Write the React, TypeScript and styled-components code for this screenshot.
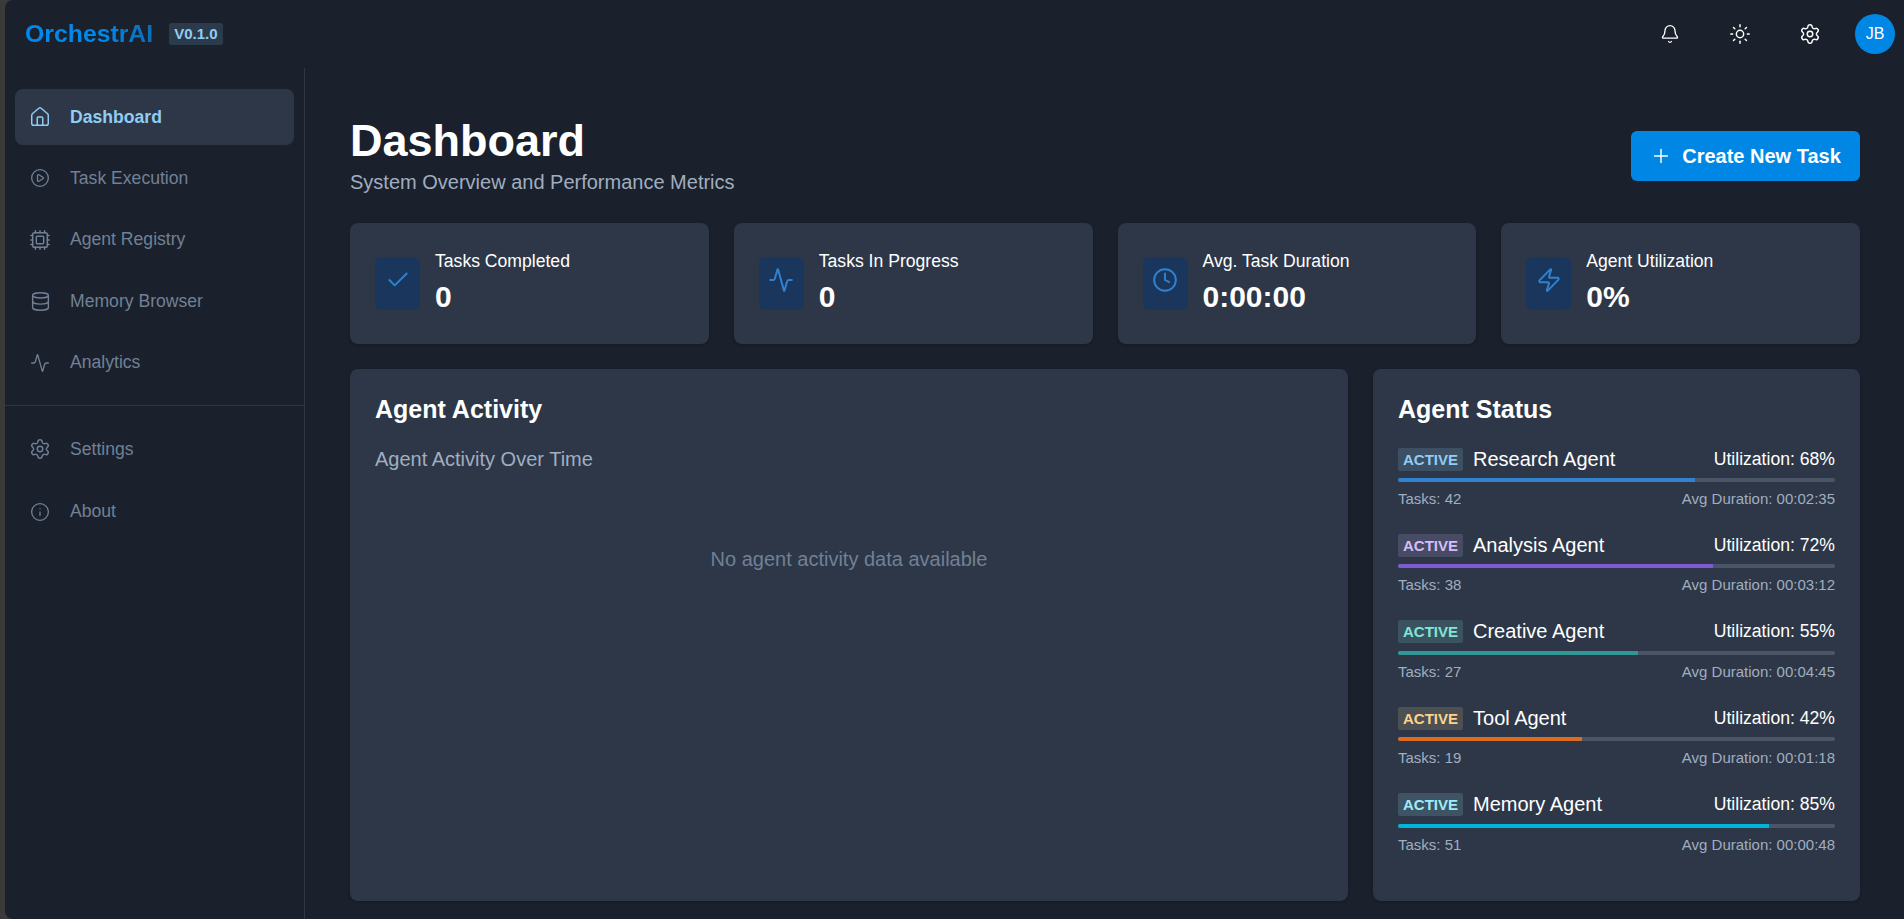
import React from "react";
import styled, { createGlobalStyle } from "styled-components";
import { Bell, Sun, Settings, House, CirclePlay, Cpu, Database, Activity, Info, Check, Clock, Zap, Plus } from "lucide-react";

const Global = createGlobalStyle`
  html, body { margin: 0; padding: 0; height: 100%; background: #3a3a3a; overflow: hidden; }
  #root { height: 100%; }
  * { box-sizing: border-box; }
  body { font-family: "Liberation Sans", Arial, sans-serif; color: #fff; }
`;

const Frame = styled.div`
  height: 919px;
  margin-left: 5px;
  background: #1a202c;
  border-top-left-radius: 8px;
  border-bottom-left-radius: 8px;
  display: flex;
  flex-direction: column;
  overflow: hidden;
`;

const Header = styled.header`
  height: 68px;
  flex: none;
  display: flex;
  align-items: center;
  justify-content: space-between;
  padding: 0 9px 0 20px;
`;

const Brand = styled.div`
  display: flex;
  align-items: center;
  gap: 16px;
`;

const Logo = styled.span`
  font-size: 24.8px;
  font-weight: 700;
  line-height: 28px;
  background: linear-gradient(90deg, #0089ec 0%, #0089ec 60%, #0b6cb5 100%);
  -webkit-background-clip: text;
  background-clip: text;
  color: transparent;
`;

const Version = styled.span`
  font-size: 15px;
  font-weight: 700;
  line-height: 20px;
  padding: 1px 5px;
  height: 22px;
  border-radius: 2px;
  color: #90cdf4;
  background: rgba(144, 205, 244, 0.16);
`;

const Tools = styled.div`
  display: flex;
  align-items: center;
`;

const ToolButton = styled.button`
  width: 40px;
  height: 40px;
  margin-right: 30px;
  background: none;
  border: 0;
  padding: 0;
  color: #fff;
  display: flex;
  align-items: center;
  justify-content: center;
`;

const Avatar = styled.div`
  width: 40px;
  height: 40px;
  margin-left: -5px;
  border-radius: 50%;
  background: #0087e6;
  display: flex;
  align-items: center;
  justify-content: center;
  font-size: 16px;
  color: #fff;
`;

const Body = styled.div`
  flex: 1;
  display: flex;
  min-height: 0;
`;

const Sidebar = styled.nav`
  width: 300px;
  flex: none;
  border-right: 1px solid #2d3748;
`;

const NavGroup = styled.div`
  padding: 21px 10px 0 10px;
  height: 338px;
  border-bottom: 1px solid #2d3748;
  display: flex;
  flex-direction: column;
  gap: 5.4px;
`;

const NavGroupLower = styled.div`
  padding: 15px 10px 0 10px;
  display: flex;
  flex-direction: column;
  gap: 6.5px;
`;

const NavItem = styled.a<{ $active?: boolean }>`
  height: 56px;
  flex: none;
  padding: 0 14px;
  display: flex;
  align-items: center;
  gap: 19px;
  border-radius: 8px;
  font-size: 17.6px;
  font-weight: ${(p) => (p.$active ? 700 : 400)};
  color: ${(p) => (p.$active ? "#90cdf4" : "#718096")};
  background: ${(p) => (p.$active ? "#2d3748" : "transparent")};
`;

const NavIcon = styled.span`
  width: 22px;
  height: 24px;
  flex: none;
  display: flex;
  align-items: center;
  justify-content: center;
`;

const Main = styled.main`
  flex: 1;
  min-width: 0;
  padding: 47px 44px 0 45px;
  display: flex;
  flex-direction: column;
`;

const TitleRow = styled.div`
  display: flex;
  justify-content: space-between;
  align-items: center;
  height: 82px;
`;

const Heading = styled.h1`
  margin: 0;
  font-size: 45px;
  line-height: 52px;
  font-weight: 700;
  color: #fff;
`;

const Subtitle = styled.p`
  margin: 1px 0 1px;
  font-size: 20px;
  line-height: 28px;
  color: #a0aec0;
`;

const CreateButton = styled.button`
  height: 50px;
  width: 229px;
  border: 0;
  border-radius: 6px;
  background: #0087e6;
  color: #fff;
  font: 700 20px "Liberation Sans", Arial, sans-serif;
  display: flex;
  align-items: center;
  justify-content: center;
  gap: 10px;
  padding: 0;
`;

const Metrics = styled.div`
  display: grid;
  grid-template-columns: repeat(4, 1fr);
  gap: 25px;
  margin-top: 26px;
`;

const Card = styled.div`
  background: #2d3748;
  border-radius: 8px;
  box-shadow: 0 1px 3px rgba(0, 0, 0, 0.2);
`;

const MetricCard = styled(Card)`
  height: 121px;
  padding: 25px 25px;
  display: flex;
  gap: 15px;
`;

const MetricIcon = styled.div`
  width: 45px;
  height: 53px;
  border-radius: 6px;
  background: #1a365d;
  color: #3182ce;
  display: flex;
  align-items: center;
  justify-content: center;
  padding-bottom: 7px;
  margin-top: 9px;
`;

const MetricText = styled.div`
  display: flex;
  flex-direction: column;
`;

const MetricLabel = styled.span`
  font-size: 17.6px;
  line-height: 26px;
  color: #fff;
`;

const MetricValue = styled.span`
  font-size: 30px;
  line-height: 36px;
  font-weight: 700;
  color: #fff;
  margin-top: 5px;
`;

const Lower = styled.div`
  display: grid;
  grid-template-columns: 998px 487px;
  gap: 25px;
  margin-top: 25px;
`;

const Panel = styled(Card)`
  height: 532px;
  padding: 25px;
`;

const PanelTitle = styled.h2`
  margin: 0;
  font-size: 25px;
  line-height: 30px;
  font-weight: 700;
  color: #fff;
`;

const ChartLabel = styled.div`
  margin-top: 21px;
  font-size: 20px;
  line-height: 28px;
  color: #a0aec0;
`;

const EmptyNote = styled.div`
  margin-top: 72px;
  text-align: center;
  font-size: 20px;
  line-height: 28px;
  color: #718096;
`;

const AgentList = styled.div`
  margin-top: 23px;
  display: flex;
  flex-direction: column;
  gap: 24.4px;
`;

const AgentRow = styled.div`
  display: flex;
  flex-direction: column;
`;

const AgentTop = styled.div`
  display: flex;
  align-items: center;
  justify-content: space-between;
  height: 24px;
`;

const AgentLeft = styled.div`
  display: flex;
  align-items: center;
  gap: 10px;
`;

const Badge = styled.span<{ $color: string; $bg: string }>`
  font-size: 15px;
  font-weight: 700;
  line-height: 21px;
  height: 23px;
  padding: 1px 5px;
  border-radius: 2px;
  color: ${(p) => p.$color};
  background: ${(p) => p.$bg};
`;

const AgentName = styled.span`
  font-size: 20px;
  color: #fff;
`;

const Utilization = styled.span`
  font-size: 17.6px;
  color: #fff;
`;

const Track = styled.div`
  height: 4px;
  margin-top: 7px;
  border-radius: 2px;
  background: #4a5568;
  overflow: hidden;
`;

const Fill = styled.div<{ $color: string }>`
  height: 100%;
  background: ${(p) => p.$color};
`;

const AgentMeta = styled.div`
  display: flex;
  justify-content: space-between;
  margin-top: 7px;
  font-size: 15px;
  line-height: 20px;
  color: #a0aec0;
`;

const agents = [
  { name: "Research Agent", util: 68, tasks: 42, dur: "00:02:35", bar: "#3182ce", color: "#90cdf4", bg: "rgba(144,205,244,0.16)" },
  { name: "Analysis Agent", util: 72, tasks: 38, dur: "00:03:12", bar: "#805ad5", color: "#d6bcfa", bg: "rgba(214,188,250,0.16)" },
  { name: "Creative Agent", util: 55, tasks: 27, dur: "00:04:45", bar: "#319795", color: "#81e6d9", bg: "rgba(129,230,217,0.16)" },
  { name: "Tool Agent", util: 42, tasks: 19, dur: "00:01:18", bar: "#dd6b20", color: "#fbd38d", bg: "rgba(251,211,141,0.16)" },
  { name: "Memory Agent", util: 85, tasks: 51, dur: "00:00:48", bar: "#00b5d8", color: "#9decf9", bg: "rgba(157,236,249,0.16)" },
];

const metrics = [
  { label: "Tasks Completed", value: "0", Icon: Check },
  { label: "Tasks In Progress", value: "0", Icon: Activity },
  { label: "Avg. Task Duration", value: "0:00:00", Icon: Clock },
  { label: "Agent Utilization", value: "0%", Icon: Zap },
];

const primaryNav = [
  { label: "Dashboard", Icon: House, size: 22, active: true },
  { label: "Task Execution", Icon: CirclePlay, size: 20 },
  { label: "Agent Registry", Icon: Cpu, size: 22 },
  { label: "Memory Browser", Icon: Database, size: 21 },
  { label: "Analytics", Icon: Activity, size: 20 },
];

const secondaryNav = [
  { label: "Settings", Icon: Settings, size: 22 },
  { label: "About", Icon: Info, size: 20 },
];

export default function App() {
  return (
    <>
      <Global />
      <Frame>
        <Header>
          <Brand>
            <Logo>OrchestrAI</Logo>
            <Version>V0.1.0</Version>
          </Brand>
          <Tools>
            <ToolButton><Bell size={20} strokeWidth={1.6} /></ToolButton>
            <ToolButton><Sun size={22} strokeWidth={1.6} /></ToolButton>
            <ToolButton><Settings size={22} strokeWidth={1.6} /></ToolButton>
            <Avatar>JB</Avatar>
          </Tools>
        </Header>
        <Body>
          <Sidebar>
            <NavGroup>
              {primaryNav.map(({ label, Icon, size, active }) => (
                <NavItem key={label} $active={active}>
                  <NavIcon><Icon size={size} strokeWidth={1.6} /></NavIcon>
                  {label}
                </NavItem>
              ))}
            </NavGroup>
            <NavGroupLower>
              {secondaryNav.map(({ label, Icon, size }) => (
                <NavItem key={label}>
                  <NavIcon><Icon size={size} strokeWidth={1.6} /></NavIcon>
                  {label}
                </NavItem>
              ))}
            </NavGroupLower>
          </Sidebar>
          <Main>
            <TitleRow>
              <div>
                <Heading>Dashboard</Heading>
                <Subtitle>System Overview and Performance Metrics</Subtitle>
              </div>
              <CreateButton><Plus size={22} strokeWidth={1.6} />Create New Task</CreateButton>
            </TitleRow>
            <Metrics>
              {metrics.map(({ label, value, Icon }) => (
                <MetricCard key={label}>
                  <MetricIcon><Icon size={26} strokeWidth={1.8} /></MetricIcon>
                  <MetricText>
                    <MetricLabel>{label}</MetricLabel>
                    <MetricValue>{value}</MetricValue>
                  </MetricText>
                </MetricCard>
              ))}
            </Metrics>
            <Lower>
              <Panel>
                <PanelTitle>Agent Activity</PanelTitle>
                <ChartLabel>Agent Activity Over Time</ChartLabel>
                <EmptyNote>No agent activity data available</EmptyNote>
              </Panel>
              <Panel>
                <PanelTitle>Agent Status</PanelTitle>
                <AgentList>
                  {agents.map((a) => (
                    <AgentRow key={a.name}>
                      <AgentTop>
                        <AgentLeft>
                          <Badge $color={a.color} $bg={a.bg}>ACTIVE</Badge>
                          <AgentName>{a.name}</AgentName>
                        </AgentLeft>
                        <Utilization>Utilization: {a.util}%</Utilization>
                      </AgentTop>
                      <Track><Fill $color={a.bar} style={{ width: `${a.util}%` }} /></Track>
                      <AgentMeta>
                        <span>Tasks: {a.tasks}</span>
                        <span>Avg Duration: {a.dur}</span>
                      </AgentMeta>
                    </AgentRow>
                  ))}
                </AgentList>
              </Panel>
            </Lower>
          </Main>
        </Body>
      </Frame>
    </>
  );
}
